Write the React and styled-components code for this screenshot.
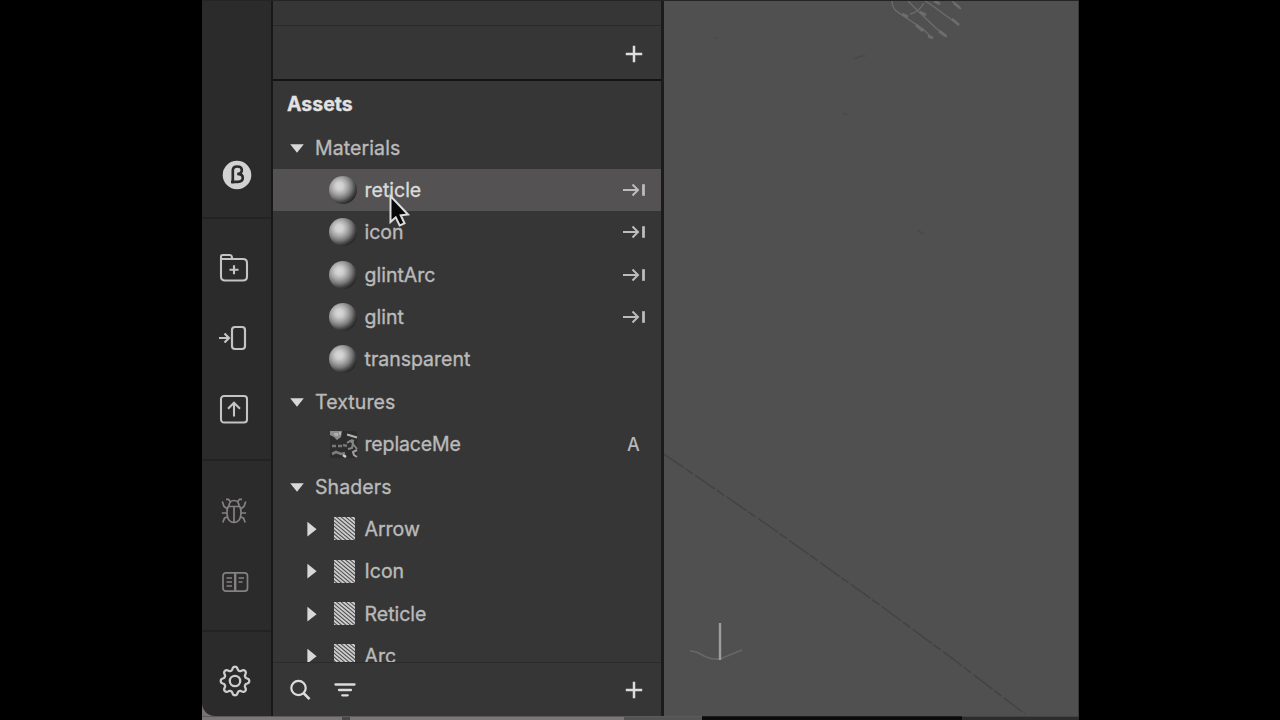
import React from "react";
import styled, { createGlobalStyle } from "styled-components";

const Global = createGlobalStyle`
  * { box-sizing: border-box; }
  html, body { margin: 0; background: #000; overflow: hidden; }
  body { font-family: Inter, "Liberation Sans", sans-serif; }
`;

const Screen = styled.div`
  position: relative;
  width: 1280px;
  height: 720px;
  background: #000;
  padding: 0 201px 0 202px;
  display: flex;
  flex-direction: column;
`;
const Window = styled.div`
  height: 716px;
  display: flex;
  border-top: 1px solid #242424;
  background: #777373;
`;
const DesktopEdge = styled.div`
  height: 4px;
  display: flex;
`;
const Edge = styled.span`
  width: ${(p) => p.$w}px;
  background: ${(p) => p.$c};
  border-top: 1px solid ${(p) => p.$line || "#5c5a5a"};
`;

const Rail = styled.nav`
  width: 69px;
  display: flex;
  flex-direction: column;
  background: #2b2b2b;
  border-bottom-left-radius: 13px;
`;
const RailGroup = styled.div`
  height: ${(p) => p.$h}px;
  padding-top: ${(p) => p.$top}px;
  display: flex;
  flex-direction: column;
  align-items: center;
  gap: ${(p) => p.$gap || 0}px;
  color: ${(p) => p.$color || "#c4c4c4"};
  border-bottom: ${(p) => (p.$last ? "0" : "2px solid #232323")};
`;
const RailButton = styled.button`
  width: 69px;
  height: 34px;
  padding: 0 ${(p) => p.$shift ?? 6}px 0 0;
  border: 0;
  background: none;
  color: inherit;
  display: flex;
  align-items: center;
  justify-content: center;
`;

const Panel = styled.section`
  width: 393px;
  display: flex;
  flex-direction: column;
  background: #363636;
  border-left: 2px solid #181818;
  border-right: 3px solid #1c1c1c;
`;
const Strip = styled.div`
  height: 25px;
  border-bottom: 1px solid #2a2a2a;
`;
const ToolRow = styled.div`
  height: 55px;
  display: flex;
  align-items: center;
  justify-content: flex-end;
  padding: 2px 17px 0 0;
  color: #dedede;
  border-bottom: 2px solid #141414;
`;
const Title = styled.h1`
  margin: 0;
  height: 45.5px;
  padding: 2px 0 0 14px;
  line-height: 43px;
  font-size: 19.5px;
  font-weight: 700;
  color: #e2e2e2;
  -webkit-text-stroke: 0.3px #e2e2e2;
`;
const Tree = styled.div`
  height: 535px;
  overflow: hidden;
`;
const Row = styled.div`
  height: 42.37px;
  display: flex;
  align-items: center;
  padding-right: 14.5px;
  padding-left: ${(p) => p.$indent}px;
  background: ${(p) => (p.$active ? "#545253" : "transparent")};
  color: ${(p) => (p.$active ? "#dadada" : "#bababa")};
`;
const Label = styled.span`
  flex: 1;
  font-size: 19.5px;
  line-height: 24px;
  letter-spacing: ${(p) => p.$ls || 0}px;
  -webkit-text-stroke: 0.35px currentColor;
`;
const Slot = styled.span`
  width: ${(p) => p.$w}px;
  height: 30px;
  display: flex;
  align-items: center;
`;
const Ball = styled.span`
  width: 28px;
  height: 28px;
  border-radius: 50%;
  background: radial-gradient(circle 19px at 37% 36%, #d8d8d8 0, #cfcfcf 20%, #a4a4a4 45%, #787878 66%, #454545 84%, #262626 100%);
`;
const Tag = styled.span`
  width: 22px;
  margin-right: 2px;
  text-align: center;
  font-size: 18px;
  font-weight: 500;
  color: #b8b8b8;
`;
const Footer = styled.div`
  flex: 1;
  display: flex;
  align-items: center;
  padding: 2px 17px 0 17px;
  border-top: 1px solid #2b2b2b;
  color: #dcdcdc;
`;
const Spacer = styled.span`
  flex: 1;
`;
const Viewport = styled.main`
  flex: 1;
  background: #505050;
  border-right: 1px solid #3a3a3a;
`;
const Pointer = styled.svg`
  position: absolute;
  left: 387px;
  top: 193px;
`;

const Plus = () => (
  <svg width="20" height="20" viewBox="0 0 20 20" stroke="currentColor" strokeWidth="2.5" fill="none">
    <path d="M10 1.800v16.400M1.800 10h16.400" />
  </svg>
);
const ArrowToBar = () => (
  <svg width="26" height="16" viewBox="0 0 26 16" stroke="#bcbcbc" strokeWidth="2" fill="none">
    <path d="M2 8h15M11.500 2.500 17 8l-5.500 5.500" />
    <path d="M22.500 2.200v11.600" strokeWidth="2.800" />
  </svg>
);
const Down = () => (
  <svg width="14" height="10" viewBox="0 0 14 10"><path d="M.2 1.200h13.600L7 9.800z" fill="#d8d8d8" /></svg>
);
const Right = () => (
  <svg width="10" height="16" viewBox="0 0 10 16"><path d="M.4.8v14.800L9.600 8.200z" fill="#d8d8d8" /></svg>
);
const Hatch = () => (
  <svg width="21" height="23" viewBox="0 0 21 23">
    <rect width="21" height="23" fill="#4a4a4a" />
    <path
      d="M-20-2l32 27M-15.500-2l32 27M-11-2l32 27M-6.500-2l32 27M-2-2l32 27M2.500-2l32 27M7-2l32 27M11.500-2l32 27M16-2l32 27M-24.500-2l32 27M-29-2l32 27"
      stroke="#cccccc" strokeWidth="1.900" />
  </svg>
);
const TextureThumb = () => (
  <svg width="29" height="29" viewBox="0 0 29 29" fill="none">
    <rect x="1" y="1" width="27" height="27" fill="#2d2d2d" />
    <path d="M1 1h12l-1 6-4 3-3-3-4-2z" fill="#8c8c8c" />
    <path d="M5 3h4v3H6zM10 2h2v3h-2z" fill="#b0b0b0" />
    <path d="M18 4.500l10 3" stroke="#b5b5b5" strokeWidth="2" />
    <path d="M18 13l3-2 3 2-1 5-4 1M22 10l3 1M24 14l4 5" stroke="#858585" strokeWidth="2" />
    <path d="M3 16h4M9 16h4M14 15l4 1" stroke="#777" strokeWidth="2.500" />
    <path d="M3 24l4-2 5 2 4-1" stroke="#7d7d7d" strokeWidth="2.600" />
    <path d="M14 25l3 2" stroke="#d0d0d0" strokeWidth="2.600" />
    <path d="M28 20l-4 2 1 3 3 2" stroke="#a0a0a0" strokeWidth="2" />
  </svg>
);

const BetaIcon = () => (
  <svg width="30" height="30" viewBox="0 0 30 30" fill="none">
    <circle cx="15" cy="15" r="14.300" fill="#d2d2d2" />
    <path d="M10.800 23.500V10.500c0-2.700 1.500-4 4.400-4s4.600 1.400 4.600 3.700c0 2.400-1.500 3.700-4.600 3.700 3.500 0 5.600 1.300 5.600 3.900 0 2.600-1.900 4.100-5.100 4.100H9" stroke="#2b2b2b" strokeWidth="2.700" />
  </svg>
);
const FolderAdd = () => (
  <svg width="30" height="30" viewBox="0 0 30 30" stroke="currentColor" strokeWidth="2.100" fill="none">
    <path d="M2 6.500V3.500q0-1.500 1.500-1.500h7.500q1 0 1.500 1l1 3H24q4 0 4 4v13.500q0 4-4 4H6q-4 0-4-4V6h11.500" />
    <path d="M15 12.200v9M10.500 16.700h9" />
  </svg>
);
const ToDevice = () => (
  <svg width="30" height="28" viewBox="0 0 30 28" stroke="currentColor" strokeWidth="2.200" fill="none">
    <rect x="14" y="3" width="13" height="22" rx="3" />
    <path d="M1 14h10M6.500 9.500l4.500 4.500-4.500 4.500" />
  </svg>
);
const Upload = () => (
  <svg width="30" height="30" viewBox="0 0 30 30" stroke="currentColor" strokeWidth="2.100" fill="none">
    <rect x="2" y="2" width="26" height="26.500" rx="3" />
    <path d="M15 22.500V9M9 14.700 15 8.700l6 6" />
  </svg>
);
const Bug = () => (
  <svg width="26" height="28" viewBox="0 0 26 28" stroke="currentColor" strokeWidth="1.700" fill="none">
    <path d="M8 9.500C8 5.500 10 3.500 13 3.500S18 5.500 18 9.500" />
    <path d="M7.300 9.500H18.700C20 12 20.200 15 19.800 18 19.200 22.500 16.500 25.500 13 25.500S6.800 22.500 6.200 18C5.800 15 6 12 7.300 9.500zM13 10v15" />
    <path d="M9.500 5 7.500 2.300H5M16.500 5l2-2.700H21M6.500 12 3 9.500 1.300 4.500M19.500 12 23 9.500l1.700-5M6 16H.8M20 16h5.200M6.500 19.800 3.500 21.200 1.800 25.500M19.500 19.800l3 1.400 1.700 4.300" />
  </svg>
);
const Book = () => (
  <svg width="28" height="22" viewBox="0 0 28 22" stroke="currentColor" strokeWidth="1.700" fill="none">
    <rect x="2" y="1.800" width="24.500" height="18.400" rx="3" />
    <path d="M14.200 2v18" strokeWidth="2.400" />
    <path d="M5.500 7h5.500M5.500 11h5.500M5.500 15h5.500M17.500 7H23M17.500 11H21.500" />
  </svg>
);
const gearPath = (() => {
  const pts = [];
  for (let i = 0; i <= 160; i++) {
    const a = (i / 160) * Math.PI * 2;
    const r = 12.600 + 1.900 * Math.tanh(Math.cos(a * 8) * 1.300);
    pts.push(`${(16 + r * Math.sin(a)).toFixed(2)} ${(16 - r * Math.cos(a)).toFixed(2)}`);
  }
  return `M${pts.join("L")}z`;
})();
const Gear = () => (
  <svg width="32" height="32" viewBox="0 0 32 32" stroke="#cccccc" strokeWidth="2.300" fill="none" strokeLinejoin="round">
    <path d={gearPath} />
    <circle cx="16" cy="16" r="5.200" />
  </svg>
);
const Search = () => (
  <svg width="22" height="22" viewBox="0 0 22 22" stroke="currentColor" strokeWidth="2.200" fill="none">
    <circle cx="8.500" cy="9" r="7.200" />
    <path d="M13.500 14l6 6.200" strokeWidth="2.600" />
  </svg>
);
const Filter = () => (
  <svg width="22" height="16" viewBox="0 0 22 16" stroke="currentColor" strokeWidth="2.300" strokeLinecap="round" fill="none">
    <path d="M1.500 2.500h19M5 8h12M8.300 13.300h5.400" />
  </svg>
);

const Scene = () => (
  <svg width="414" height="715" viewBox="0 0 414 715" fill="none">
    <path d="M0 453 105 525 220 607 293 661 361 713" stroke="#434343" strokeWidth="1.500" strokeDasharray="24 2 9 3" />
    <g stroke="#706c6d" strokeWidth="1.300">
      <path d="M228 0q0 8 7 12l24 16 9 9M246 13q8-1 14-11M244 0l12 12 17 16 10 8M261 0l5 3 18 13 11 8M288 0l9 8" />
      <path d="M238 13l6 3M252 24l7 6M264 35l5 2M256 11l6 3M275 30l7 5M288 18l7 6M290 2l6 5M270 0l6 3" strokeWidth="2.800" />
    </g>
    <path d="M202 55h-5l-7 3M50 37h4M254 229l5 4M179 112l4 2" stroke="#464646" strokeWidth="1.200" />
    <path d="M26 650q6 0 12 4 9 5 18 4l22-9" stroke="#6a6566" strokeWidth="1.700" />
    <path d="M56 622v37" stroke="#a09d9e" strokeWidth="2.400" />
  </svg>
);

const materials = [
  { name: "reticle", active: true, ref: true },
  { name: "icon", ref: true },
  { name: "glintArc", ref: true },
  { name: "glint", ref: true },
  { name: "transparent" },
];
const shaders = ["Arrow", "Icon", "Reticle", "Arc"];

const Category = ({ children }) => (
  <Row $indent={17}>
    <Slot $w={25}><Down /></Slot>
    <Label $ls={0.1}>{children}</Label>
  </Row>
);

export default function App() {
  return (
    <Screen>
      <Global />
      <Window>
        <Rail>
          <RailGroup $h={218} $top={157}>
            <RailButton $shift={0}><BetaIcon /></RailButton>
          </RailGroup>
          <RailGroup $h={242} $top={31.5} $gap={36.7}>
            <RailButton><FolderAdd /></RailButton>
            <RailButton $shift={7}><ToDevice /></RailButton>
            <RailButton><Upload /></RailButton>
          </RailGroup>
          <RailGroup $h={171} $top={32.5} $gap={37} $color="#858182">
            <RailButton><Bug /></RailButton>
            <RailButton $shift={4}><Book /></RailButton>
          </RailGroup>
          <RailGroup $h={84} $top={32} $last>
            <RailButton $shift={4}><Gear /></RailButton>
          </RailGroup>
        </Rail>
        <Panel>
          <Strip />
          <ToolRow><Plus /></ToolRow>
          <Title>Assets</Title>
          <Tree>
            <Category>Materials</Category>
            {materials.map((m) => (
              <Row key={m.name} $indent={55.5} $active={m.active}>
                <Slot $w={36}><Ball /></Slot>
                <Label>{m.name}</Label>
                {m.ref && <ArrowToBar />}
              </Row>
            ))}
            <Category>Textures</Category>
            <Row $indent={55.5}>
              <Slot $w={36}><TextureThumb /></Slot>
              <Label $ls={-0.15}>replaceMe</Label>
              <Tag>A</Tag>
            </Row>
            <Category>Shaders</Category>
            {shaders.map((s) => (
              <Row key={s} $indent={34}>
                <Slot $w={26.5}><Right /></Slot>
                <Slot $w={31}><Hatch /></Slot>
                <Label>{s}</Label>
              </Row>
            ))}
          </Tree>
          <Footer>
            <Slot $w={44}><Search /></Slot>
            <Filter />
            <Spacer />
            <Plus />
          </Footer>
        </Panel>
        <Viewport><Scene /></Viewport>
      </Window>
      <DesktopEdge>
        <Edge $w={140} $c="#7b7777" />
        <Edge $w={8} $c="#4a4848" />
        <Edge $w={274} $c="#7b7777" />
        <Edge $w={78} $c="#555353" />
        <Edge $w={260} $c="#0c0a0b" $line="#1c1b1b" />
        <Edge $w={117} $c="#2e2c2d" $line="#444" />
      </DesktopEdge>
      <Pointer width="26" height="36" viewBox="0 0 26 36">
        <path d="M3.500 3v26l5.200-4.700 4 8.200 4.800-2.200-3.800-8 7.300-.800z" fill="#080808" stroke="#dedede" strokeWidth="2" />
      </Pointer>
    </Screen>
  );
}
